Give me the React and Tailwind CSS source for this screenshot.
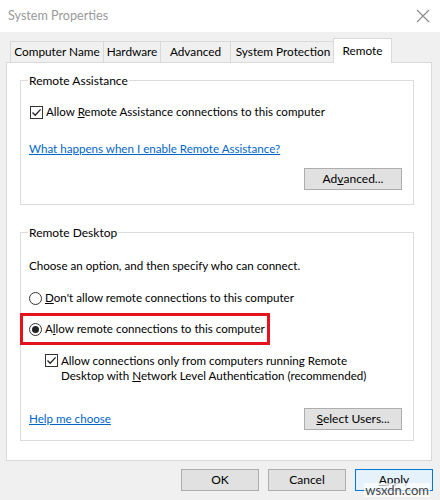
import React from "react";

const F = { fontFamily: 'Lato, "Liberation Sans", Arial, sans-serif' };

function Check() {
  return (
    <span className="w-[13px] h-[13px] border border-[#333] bg-white flex items-center justify-center shrink-0">
      <svg width="11" height="11" viewBox="0 0 11 11">
        <path d="M1.5 5.5 L4.2 8.3 L9.6 2.4" fill="none" stroke="#222" strokeWidth="1.3" />
      </svg>
    </span>
  );
}

function Radio({ on }) {
  return (
    <span className="w-[13px] h-[13px] rounded-full border border-[#333] bg-white flex items-center justify-center shrink-0">
      {on && <span className="w-[7px] h-[7px] rounded-full bg-[#222]" />}
    </span>
  );
}

function Btn({ children, w = "w-[98px]", tone = "border-[#adadad] bg-[#e1e1e1]" }) {
  return (
    <div className={"h-[22px] border flex items-center justify-center text-[12px] text-black whitespace-nowrap " + w + " " + tone}>
      {children}
    </div>
  );
}

function Tab({ children, w, active }) {
  return active ? (
    <div className={"h-[25px] -mb-[1px] -ml-[2px] border border-b-0 border-[#d9d9d9] bg-white flex items-start justify-center pt-[3px] relative z-10 whitespace-nowrap " + w}>
      {children}
    </div>
  ) : (
    <div className={"h-[21px] border border-r-0 border-b-0 border-[#d9d9d9] bg-[#f0f0f0] flex items-center justify-center whitespace-nowrap " + w}>
      {children}
    </div>
  );
}

export default function App() {
  return (
    <div className="w-[440px] h-[500px] bg-[#f0f0f0] text-[11.6px] text-[#000] relative overflow-hidden whitespace-nowrap" style={F}>
      <div className="h-[32px] bg-white flex items-center justify-between pl-[8px] pr-[8px]">
        <span className="text-[12.6px] text-[#9a9a9a]">System Properties</span>
        <svg width="16" height="16" viewBox="0 0 16 16" className="mr-[1px]">
          <path d="M2 2 L14 14 M14 2 L2 14" stroke="#8a8a8a" strokeWidth="1.1" />
        </svg>
      </div>
      <div className="pl-[6px] pt-[6px]">
        <div className="flex items-end pl-[4px] h-[24px] text-[11.8px]">
          <Tab w="w-[93px]">Computer Name</Tab>
          <Tab w="w-[57px]">Hardware</Tab>
          <Tab w="w-[70px]">Advanced</Tab>
          <Tab w="w-[105px]">System Protection</Tab>
          <Tab w="w-[59px]" active>Remote</Tab>
        </div>
        <div className="w-[426px] h-[399px] border border-[#d9d9d9] bg-white pt-[9px] pl-[13px]">
          <fieldset className="w-[394px] h-[133px] border border-[#dcdcdc] pl-[8px]">
            <legend className="-ml-[1px] px-[1px] leading-[17px] text-[12px]">Remote Assistance</legend>
            <div className="flex items-center gap-[3px] mt-[15px] ml-[1px] leading-[16px]">
              <Check />
              <span>Allow <span className="underline">R</span>emote Assistance connections to this computer</span>
            </div>
            <div className="mt-[21px] text-[#0066cc] underline leading-[16px]">What happens when I enable Remote Assistance?</div>
            <div className="flex justify-end pr-[11px] mt-[11px]">
              <Btn>Ad<span className="underline">v</span>anced...</Btn>
            </div>
          </fieldset>
          <fieldset className="w-[394px] h-[217px] border border-[#dcdcdc] pl-[8px] mt-[19px]">
            <legend className="-ml-[1px] px-[1px] leading-[17px] text-[12px]">Remote Desktop</legend>
            <div className="mt-[17px] leading-[16px]">Choose an option, and then specify who can connect.</div>
            <div className="flex items-center gap-[3px] mt-[16px] leading-[16px]">
              <Radio />
              <span><span className="underline">D</span>on't allow remote connections to this computer</span>
            </div>
            <div className="-ml-[9px] mt-[7px] w-[250px] h-[32px] border-[3px] border-[#e5141c] flex items-center gap-[3px] pl-[6px] leading-[16px]">
              <Radio on />
              <span>A<span className="underline">l</span>low remote connections to this computer</span>
            </div>
            <div className="flex items-start gap-[3px] ml-[16px] mt-[8px] leading-[15px]">
              <span className="mt-[1px]"><Check /></span>
              <span>Allow connections only from computers running Remote<br />Desktop with <span className="underline">N</span>etwork Level Authentication (recommended)</span>
            </div>
            <div className="flex items-center justify-between pr-[11px] mt-[25px]">
              <span className="text-[#0066cc] underline leading-[16px]">Help me choose</span>
              <Btn><span className="underline">S</span>elect Users...</Btn>
            </div>
          </fieldset>
        </div>
      </div>
      <div className="flex justify-end gap-[9px] pr-[7px] mt-[8px] text-[12.5px]">
        <Btn w="w-[78px]">OK</Btn>
        <Btn w="w-[78px]">Cancel</Btn>
        <Btn w="w-[78px]" tone="border-[#0078d7] bg-[#e5f1fb]"><span className="underline">A</span>pply</Btn>
      </div>
      <div className="absolute right-[10px] bottom-[3px] text-[13px] text-[#444] bg-white/70 leading-[14px] px-[1px]">wsxdn.com</div>
    </div>
  );
}
